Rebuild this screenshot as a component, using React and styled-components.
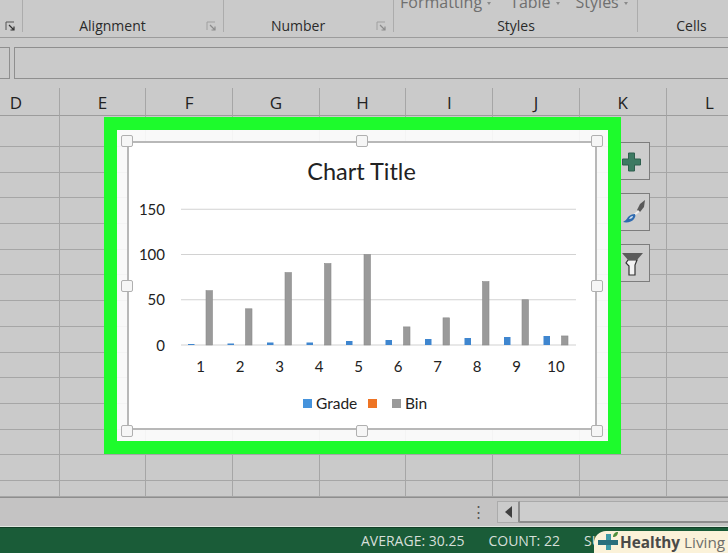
import React from 'react';
import styled, { createGlobalStyle } from 'styled-components';

const GlobalStyle = createGlobalStyle`
  html, body {
    margin: 0;
    padding: 0;
    background: #cacaca;
  }
`;

const Page = styled.div`
  position: relative;
  width: 728px;
  height: 553px;
  overflow: hidden;
  display: flex;
  flex-direction: column;
  background: #cacaca;
  color: #1c1c1c;
  font-family: "Open Sans", "Noto Sans", sans-serif;
`;

const Ribbon = styled.div`
  height: 37px;
  flex: none;
  display: flex;
  border-bottom: 1px solid #9c9c9c;
`;

const Group = styled.div`
  width: ${p => p.$width}px;
  flex: none;
  height: 32px;
  box-sizing: border-box;
  display: flex;
  flex-direction: column;
  justify-content: flex-end;
  border-right: ${p => (p.$last ? 'none' : '1px solid #acacac')};
`;

const GroupFoot = styled.div`
  height: 20px;
  margin-bottom: -4px;
  display: flex;
  align-items: center;
`;

const GroupLabel = styled.div`
  flex: 1;
  text-align: center;
  font-size: 14px;
  line-height: 20px;
  color: #2a2a2a;
  padding-left: 1px;
`;

const Launcher = styled.svg`
  width: 11px;
  height: 11px;
  flex: none;
  margin: 0 6px 0 5px;
`;

const StyleMenu = styled.div`
  display: flex;
  height: 12px;
  margin-bottom: 8px;
  align-items: flex-end;
  padding-left: 6px;
  font-size: 16px;
  line-height: 12px;
  color: #6f6f6f;
  white-space: nowrap;
`;

const StyleItem = styled.span`
  margin-right: ${p => p.$gap}px;
  &::after {
    content: '';
    display: inline-block;
    margin-left: 5px;
    vertical-align: 3px;
    border-left: 2.5px solid transparent;
    border-right: 2.5px solid transparent;
    border-top: 3px solid #8a8a8a;
  }
`;

const FormulaBar = styled.div`
  height: 50px;
  flex: none;
  box-sizing: border-box;
  padding: 9px 0 9px;
  display: flex;
  gap: 4px;
`;

const NameBox = styled.div`
  width: 10px;
  flex: none;
  box-sizing: border-box;
  border: 1px solid #8f8f8f;
  border-left: none;
`;

const FormulaInput = styled.div`
  flex: 1;
  box-sizing: border-box;
  border: 1px solid #8f8f8f;
  border-right: none;
`;

const Columns = styled.div`
  display: grid;
  grid-template-columns: repeat(9, 86.7px);
  margin-left: -27px;
  flex: none;
`;

const ColumnHead = styled.div`
  height: 28px;
  box-sizing: border-box;
  border-right: 1px solid #a6a6a6;
  border-bottom: 1px solid #9c9c9c;
  text-align: center;
  font-size: 17px;
  line-height: 29px;
  color: #222;
`;

const Cell = styled.div`
  height: ${p => p.$height}px;
  box-sizing: border-box;
  border-right: 1px solid #a6a6a6;
  border-bottom: 1px solid #a6a6a6;
`;

const ScrollRow = styled.div`
  height: 30px;
  flex: none;
  background: #c4c3c3;
  border-top: 1px solid #8e8e8e;
  display: flex;
  align-items: flex-start;
  padding-top: 3px;
  box-sizing: border-box;
`;

const SheetDots = styled.div`
  width: 497px;
  flex: none;
  text-align: right;
  padding-right: 11px;
  box-sizing: border-box;
  font-size: 15px;
  line-height: 20px;
  color: #555;
`;

const ScrollArrow = styled.div`
  width: 23px;
  height: 22px;
  flex: none;
  box-sizing: border-box;
  border: 1px solid #ababab;
  border-right: 2px solid #8c8c8c;
  display: flex;
  align-items: center;
  justify-content: center;
  background: #cbcbcb;
  &::before {
    content: '';
    border-top: 6px solid transparent;
    border-bottom: 6px solid transparent;
    border-right: 7px solid #3f3f3f;
  }
`;

const ScrollTrack = styled.div`
  flex: 1;
  height: 22px;
  box-sizing: border-box;
  border-top: 1px solid #a9a9a9;
  border-bottom: 2px solid #8c8c8c;
  background: #cdcdcd;
`;

const StatusBar = styled.div`
  height: 26px;
  flex: none;
  box-sizing: border-box;
  background: #1a5c38;
  border-top: 1px solid #123f27;
  box-shadow: 0 -1px 0 #dfe6df;
  display: flex;
  align-items: center;
  padding-left: 361px;
  gap: 24px;
  font-size: 14px;
  color: #d6dfd9;
  white-space: nowrap;
`;

const Watermark = styled.div`
  position: absolute;
  left: 594px;
  top: 531px;
  width: 134px;
  height: 22px;
  background: #fbf2d9;
  border-radius: 12px 0 0 0;
  display: flex;
  align-items: center;
  padding-left: 4px;
  box-sizing: border-box;
  font-size: 15.3px;
  white-space: nowrap;
`;

const Healthy = styled.span`
  font-weight: 700;
  color: #4a4a48;
  margin-left: 1px;
`;

const Living = styled.span`
  color: #6e6e6a;
  margin-left: 4px;
`;

const ChartFrame = styled.div`
  position: absolute;
  left: 104px;
  top: 117px;
  width: 517px;
  height: 337px;
  box-sizing: border-box;
  border: 13px solid #1dfb2c;
  background: rgba(255, 255, 255, 0.88);
`;

const ChartBox = styled.div`
  position: absolute;
  left: 10px;
  top: 11px;
  width: 470px;
  height: 289px;
  box-sizing: border-box;
  background: #fff;
  border: 2px solid #b8b8b8;
`;

const Handle = styled.div`
  position: absolute;
  width: 12px;
  height: 12px;
  box-sizing: border-box;
  left: ${p => p.$x}px;
  top: ${p => p.$y}px;
  background: #f6f6f6;
  border: 1px solid #b0b0b0;
  border-radius: 2px;
`;

const ChartSvg = styled.svg`
  position: absolute;
  left: -2px;
  top: -2px;
  width: 470px;
  height: 289px;
  font-family: Lato, "Open Sans", sans-serif;
  fill: #222;
`;

const SideButtons = styled.div`
  position: absolute;
  left: 612px;
  top: 142px;
  display: flex;
  flex-direction: column;
  gap: 13px;
`;

const SideButton = styled.div`
  width: 38px;
  height: 38px;
  box-sizing: border-box;
  border: 1px solid #7d7d7d;
  background: #cdcdcd;
  display: flex;
`;

const gradeValues = [1, 1.5, 2.5, 2.5, 4, 5, 6, 7, 8, 9];
const binValues = [60, 40, 80, 90, 100, 20, 30, 70, 50, 10];
const yTicks = [150, 100, 50, 0];
const columnNames = ['D', 'E', 'F', 'G', 'H', 'I', 'J', 'K', 'L'];
const rowHeights = [31, ...Array(13).fill(25.7), 15.9];

// chart coordinates are relative to the chart box at 127,142
const baseY = 204;
const plotLeft = 54;
const plotRight = 449;
const catWidth = 39.5;

const LauncherIcon = ({ dark }) => (
  <Launcher viewBox="0 0 11 11">
    <path d="M1 9V1h8" fill="none" stroke={dark ? '#555' : '#a0a0a0'} strokeWidth="1" />
    <path d="M4 4l5 5M9 5.5V9H5.5" fill="none" stroke={dark ? '#333' : '#8c8c8c'} strokeWidth="1.2" />
  </Launcher>
);

const Chart = () => (
  <ChartSvg viewBox="0 0 470 289">
    <text x="234.5" y="39" fontSize="23.5" textAnchor="middle">Chart Title</text>
    {yTicks.map(tick => {
      const y = baseY - tick * 0.905;
      return (
        <g key={tick}>
          <line x1={plotLeft} x2={plotRight} y1={y} y2={y} stroke="#d2d2d2" strokeWidth="1.2" />
          <text x="38" y={y + 5.5} fontSize="15" textAnchor="end">{tick}</text>
        </g>
      );
    })}
    {gradeValues.map((value, i) => (
      <rect key={i} x={61 + i * catWidth} y={baseY - value} width="6.5" height={value} fill="#3f86cf" />
    ))}
    {binValues.map((value, i) => (
      <rect key={i} x={79 + i * catWidth} y={baseY - value * 0.905} width="6.5" height={value * 0.905} fill="#9a9a9a" stroke="#8a8a8a" strokeWidth="0.6" />
    ))}
    {binValues.map((_, i) => (
      <text key={i} x={73.5 + i * catWidth} y="231" fontSize="15" textAnchor="middle">{i + 1}</text>
    ))}
    <rect x="176" y="258" width="9" height="9" fill="#4593dc" />
    <text x="189" y="268" fontSize="15.5">Grade</text>
    <rect x="241" y="258" width="9" height="9" fill="#ee7424" />
    <rect x="265" y="258" width="9" height="9" fill="#9a9a9a" />
    <text x="278" y="268" fontSize="15.5">Bin</text>
  </ChartSvg>
);

const App = () => {
  return (
    <Page>
      <GlobalStyle />
      <Ribbon>
        <Group $width={23}>
          <GroupFoot><LauncherIcon dark /></GroupFoot>
        </Group>
        <Group $width={201}>
          <GroupFoot>
            <GroupLabel>Alignment</GroupLabel>
            <LauncherIcon />
          </GroupFoot>
        </Group>
        <Group $width={170}>
          <GroupFoot>
            <GroupLabel>Number</GroupLabel>
            <LauncherIcon />
          </GroupFoot>
        </Group>
        <Group $width={244}>
          <StyleMenu>
            <StyleItem $gap={19}>Formatting</StyleItem>
            <StyleItem $gap={16}>Table</StyleItem>
            <StyleItem $gap={0}>Styles</StyleItem>
          </StyleMenu>
          <GroupFoot><GroupLabel>Styles</GroupLabel></GroupFoot>
        </Group>
        <Group $width={106} $last>
          <GroupFoot><GroupLabel>Cells</GroupLabel></GroupFoot>
        </Group>
      </Ribbon>

      <FormulaBar>
        <NameBox />
        <FormulaInput />
      </FormulaBar>

      <Columns>
        {columnNames.map(name => <ColumnHead key={name}>{name}</ColumnHead>)}
        {rowHeights.map((height, row) =>
          columnNames.map(name => <Cell key={row + name} $height={height} />)
        )}
      </Columns>

      <ScrollRow>
        <SheetDots>⋮</SheetDots>
        <ScrollArrow />
        <ScrollTrack />
      </ScrollRow>

      <StatusBar>
        <span>AVERAGE: 30.25</span>
        <span>COUNT: 22</span>
        <span>SU</span>
      </StatusBar>

      <SideButtons>
        <SideButton>
          <svg width="36" height="36" viewBox="0 0 36 36">
            <path d="M15.500 10h6v6h6v6h-6v6h-6v-6h-6v-6h6z" fill="#3d7a62" stroke="#2f5f4e" strokeWidth="1" />
          </svg>
        </SideButton>
        <SideButton>
          <svg width="36" height="36" viewBox="0 0 36 36">
            <path d="M32 6l-1 7-4 5-3-2 3-6z" fill="#5a5a5a" />
            <path d="M26 17l-5 4" stroke="#eeeeee" strokeWidth="2" />
            <path d="M22 20c-3 0-5 1-7 3-1 2-3 4-5 5 4 1 9 0 11-3 1-2 2-3 1-5z" fill="#2f6bb0" />
            <path d="M20 22c-2 0-3 1-4 3 2 0 4-1 4-3z" fill="#cfe0f2" />
          </svg>
        </SideButton>
        <SideButton>
          <svg width="36" height="36" viewBox="0 0 36 36">
            <path d="M15 15l-2 3 3 3v9h6V20l2-5z" fill="#f2f2f2" stroke="#333" strokeWidth="1.2" />
            <path d="M9 8h21l-6 7H15z" fill="#5b5b5b" />
          </svg>
        </SideButton>
      </SideButtons>

      <ChartFrame>
        <ChartBox>
          <Chart />
        </ChartBox>
        <Handle $x={4} $y={5} />
        <Handle $x={239} $y={5} />
        <Handle $x={474} $y={5} />
        <Handle $x={4} $y={150} />
        <Handle $x={474} $y={150} />
        <Handle $x={4} $y={295} />
        <Handle $x={239} $y={295} />
        <Handle $x={474} $y={295} />
      </ChartFrame>

      <Watermark>
        <svg width="21" height="20" viewBox="0 0 21 20">
          <path d="M8 2h5v16H8z" fill="#3f9aa6" />
          <path d="M0 8h20v5H0z" fill="#2a6f7c" />
          <path d="M15 5c0-3 2-5 5-5 0 3-2 5-5 5z" fill="#4f8f3a" />
        </svg>
        <Healthy>Healthy</Healthy>
        <Living>Living</Living>
      </Watermark>
    </Page>
  );
};

export default App;
